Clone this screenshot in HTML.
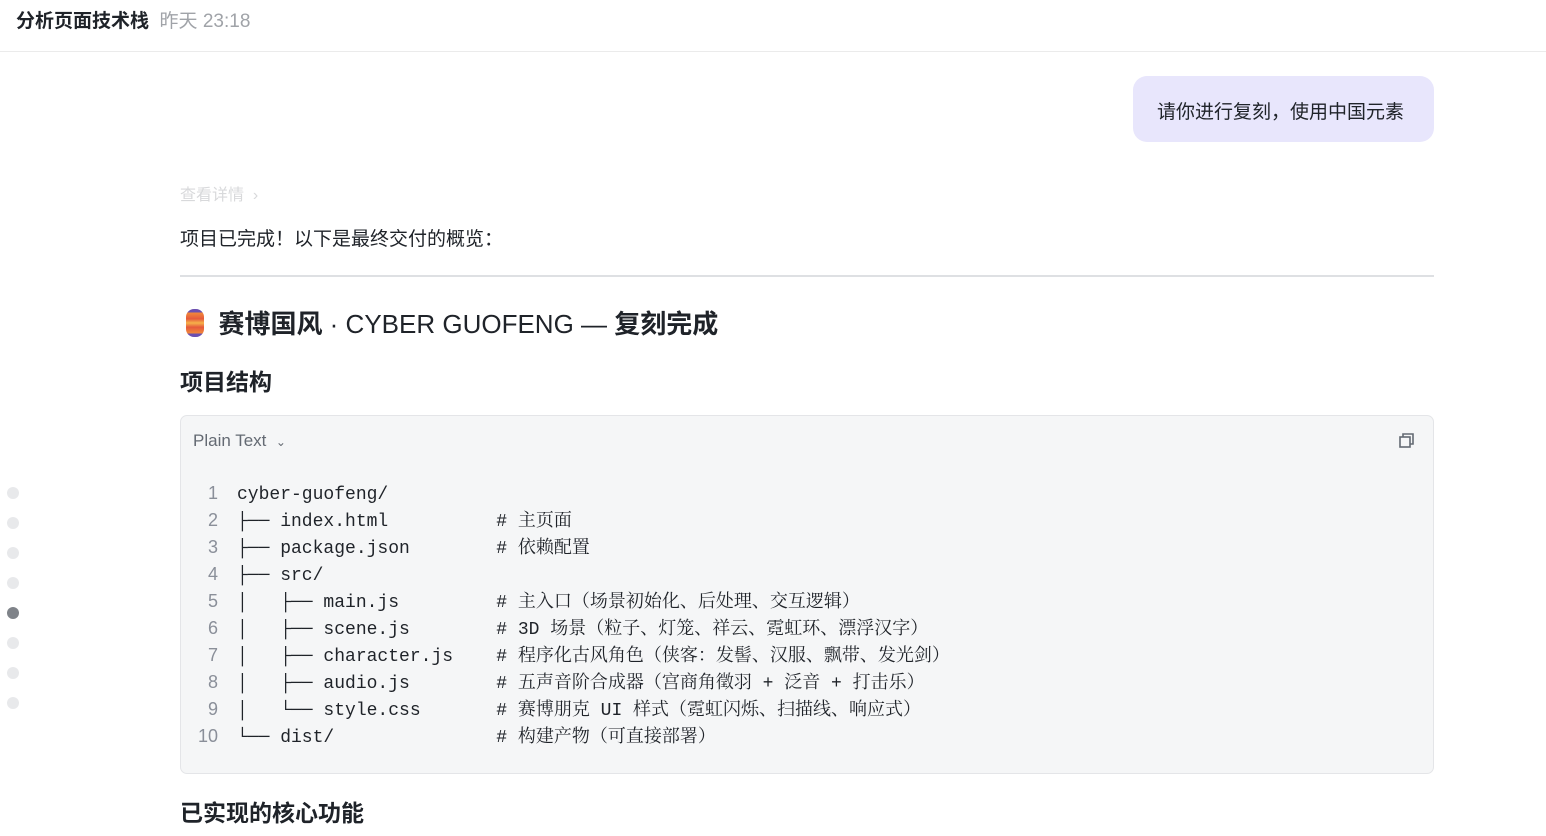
<!DOCTYPE html>
<html><head><meta charset="utf-8"><style>
*{margin:0;padding:0;box-sizing:border-box}
body{width:1546px;height:836px;overflow:hidden;background:#fff;font-family:"Liberation Sans","Noto Sans CJK SC",sans-serif;color:#1f2329;position:relative}
.a{position:absolute;white-space:nowrap}
.hdr{left:0;top:0;width:1546px;height:52px;border-bottom:1px solid #ebebeb}
.dot{position:absolute;left:7px;width:12px;height:12px;border-radius:50%;background:#e8e9eb}
pre.a{white-space:pre;font-family:"Liberation Mono","DejaVu Sans Mono","Noto Serif CJK SC",monospace;font-size:18px;line-height:27px;color:#1f2329}
.ln{color:#8a8f99;text-align:right;width:38px;font-family:"Liberation Sans",sans-serif;font-size:18px;line-height:27px}
</style></head><body>
<div class="a hdr"></div>
<div class="a" style="left:16px;top:6px;font-size:19px;font-weight:bold;color:#1f2329">分析页面技术栈 <span style="font-weight:normal;color:#a0a3a8;font-size:19px">&nbsp;昨天 23:18</span></div>

<div class="a" style="left:1133px;top:76px;width:301px;height:66px;background:#e8e6fc;border-radius:14px"></div>
<div class="a" style="left:1157px;top:97px;font-size:19px;color:#1f2329">请你进行复刻，使用中国元素</div>

<div class="a" style="left:180px;top:181px;font-size:16px;color:#d8d9db">查看详情 &nbsp;›</div>
<div class="a" style="left:180px;top:224px;font-size:19px;color:#1f2329">项目已完成！以下是最终交付的概览：</div>
<div class="a" style="left:180px;top:275px;width:1254px;height:2px;background:#dee0e3"></div>

<div class="a" style="left:186px;top:304px;font-size:26px;font-weight:bold">
<span style="display:inline-block;width:18px;height:28px;border-radius:8px;background:linear-gradient(#6b4fb0 0 12%,#f28b3a 12%,#e55a3c 35%,#f6b24a 50%,#e55a3c 65%,#f28b3a 88%,#6b4fb0 88%);vertical-align:-4px"></span>&nbsp; 赛博国风 <span style="font-weight:normal">· CYBER GUOFENG —</span> 复刻完成</div>
<div class="a" style="left:180px;top:363px;font-size:23px;font-weight:bold">项目结构</div>

<div class="a" style="left:180px;top:415px;width:1254px;height:359px;background:#f5f6f7;border:1px solid #e4e5e8;border-radius:7px"></div>
<div class="a" style="left:193px;top:431px;font-size:17px;color:#646a73">Plain Text &nbsp;<span style="font-size:12px">⌄</span></div>
<svg class="a" style="left:1398px;top:432px" width="18" height="18" viewBox="0 0 18 18" fill="none" stroke="#646a73" stroke-width="1.6"><rect x="2" y="5" width="10" height="10"/><path d="M5 5V2h10v10h-3"/></svg>

<div class="a ln" style="left:180px;top:480px">1<br>2<br>3<br>4<br>5<br>6<br>7<br>8<br>9<br>10</div>
<pre class="a" style="left:237px;top:482px">cyber-guofeng/
├── index.html          # 主页面
├── package.json        # 依赖配置
├── src/
│   ├── main.js         # 主入口（场景初始化、后处理、交互逻辑）
│   ├── scene.js        # 3D 场景（粒子、灯笼、祥云、霓虹环、漂浮汉字）
│   ├── character.js    # 程序化古风角色（侠客：发髻、汉服、飘带、发光剑）
│   ├── audio.js        # 五声音阶合成器（宫商角徵羽 + 泛音 + 打击乐）
│   └── style.css       # 赛博朋克 UI 样式（霓虹闪烁、扫描线、响应式）
└── dist/               # 构建产物（可直接部署）</pre>

<div class="a" style="left:180px;top:794px;font-size:23px;font-weight:bold">已实现的核心功能</div>

<div class="dot" style="top:487px"></div><div class="dot" style="top:517px"></div><div class="dot" style="top:547px"></div><div class="dot" style="top:577px"></div>
<div class="dot" style="top:607px;background:#7f8389"></div><div class="dot" style="top:637px"></div><div class="dot" style="top:667px"></div><div class="dot" style="top:697px"></div>
</body></html>
